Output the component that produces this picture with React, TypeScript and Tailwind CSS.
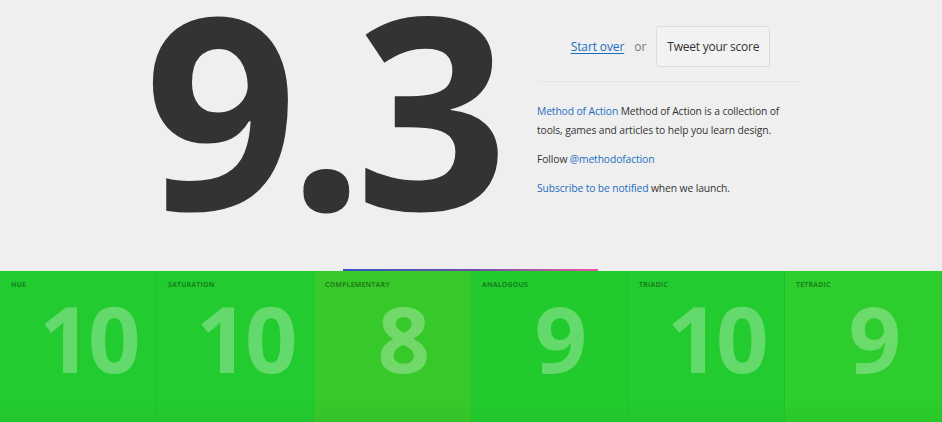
const scores = [
  { label: 'Hue', value: 10, bg: 'bg-[#22cb2f]' },
  { label: 'Saturation', value: 10, bg: 'bg-[#22cb2f]' },
  { label: 'Complementary', value: 8, bg: 'bg-[#37c82a]' },
  { label: 'Analogous', value: 9, bg: 'bg-[#22cb2d]' },
  { label: 'Triadic', value: 10, bg: 'bg-[#22cb2f]' },
  { label: 'Tetradic', value: 9, bg: 'bg-[#2ccd2c]' },
];

const App = () => {
  return (
    <div className="w-[942px] h-[422px] overflow-hidden bg-[#efefef] font-['Open_Sans',sans-serif] text-[#333]">
      {/* Score + info */}
      <section className="flex h-[271px]">
        <div className="w-[537px] flex justify-end pr-[38px]">
          <div className="text-[268px] font-bold leading-[214px] tracking-[-0.035em] text-[#333] whitespace-nowrap">9.3</div>
        </div>
        <div className="flex-1 pt-[26px] pr-[142px]">
          <div className="flex items-center justify-center gap-[10px] h-[41px] pl-[4px]">
            <a href="#" className="text-[12px] tracking-[-0.01em] text-[#1b6ec2] underline underline-offset-2">Start over</a>
            <span className="text-[12px] text-[#777]">or</span>
            <button className="h-[41px] px-[10px] rounded-[3px] border border-[#dcdcdc] bg-[#f2f2f2] text-[12px] tracking-[-0.02em] text-[#333]">
              Tweet your score
            </button>
          </div>
          <div className="mt-[14px] ml-[3px] h-px bg-[#e4e4e4]" />
          <div className="mt-[20px] text-[10.3px] leading-[19px] tracking-[-0.01em]">
            <p>
              <a href="#" className="text-[#1b6ec2]">Method of Action</a> Method of Action is a collection of tools,
              games and articles to help you learn design.
            </p>
            <p className="mt-[10px]">
              Follow <a href="#" className="text-[#1b6ec2]">@methodofaction</a>
            </p>
            <p className="mt-[10px]">
              <a href="#" className="text-[#1b6ec2]">Subscribe to be notified</a> when we launch.
            </p>
          </div>
        </div>
      </section>

      {/* Breakdown tiles */}
      <section className="relative grid grid-cols-6 h-[151px]">
        <div className="absolute left-[343px] top-[-2px] w-[255px] h-[2px] bg-gradient-to-r from-[#2f56c4] via-[#6a4fa8] to-[#e5589c]" />
        {scores.map((s) => (
          <div key={s.label} className={`relative ${s.bg} border-r border-black/5 overflow-hidden`}>
            <div className="pl-[11px] pt-[9px] text-[7px] leading-[10px] font-bold uppercase tracking-[0.02em] text-black/40">{s.label}</div>
            <div className="mt-[5px] pl-[20px] text-center text-[92px] font-bold leading-[86px] tracking-[-0.04em] text-white/30">
              {s.value}
            </div>
            <div className="absolute inset-x-0 bottom-0 h-[18px] bg-gradient-to-b from-transparent to-black/[0.03]" />
          </div>
        ))}
      </section>
    </div>
  );
};

export default App;
